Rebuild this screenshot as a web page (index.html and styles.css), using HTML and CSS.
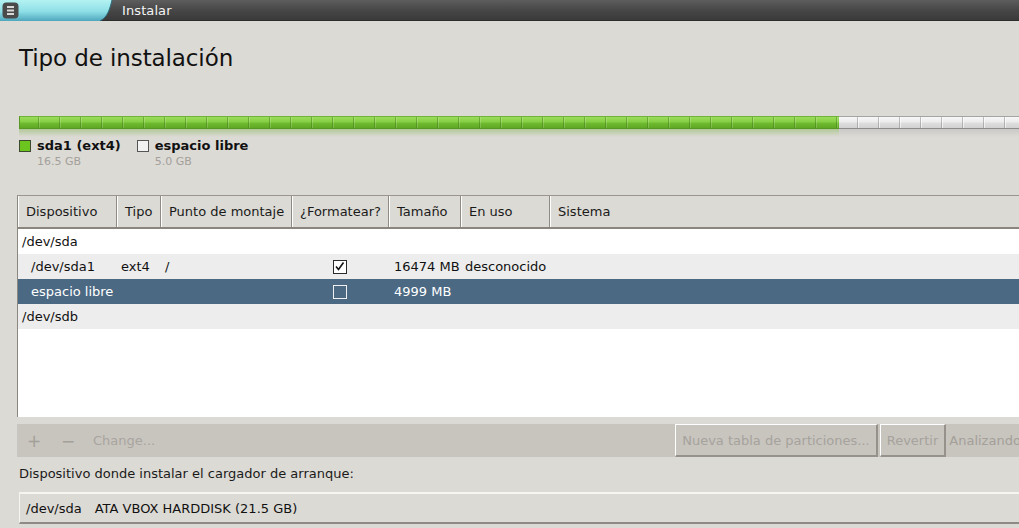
FILE: index.html
```html
<!DOCTYPE html>
<html lang="es">
<head>
<meta charset="utf-8">
<title>Instalar</title>
<link rel="stylesheet" href="styles.css">
</head>
<body>
<div class="page">
  <header class="topbar">
    <div class="tab">
      <svg class="tab-shape" width="116" height="21" viewBox="0 0 116 21">
        <defs>
          <linearGradient id="cy" x1="0" y1="0" x2="0" y2="1">
            <stop offset="0" stop-color="#b4f2f2"/>
            <stop offset="0.55" stop-color="#8ddfe6"/>
            <stop offset="1" stop-color="#4fa7bd"/>
          </linearGradient>
        </defs>
        <path d="M0 0 H112 C110 8 108 17 100 21 H0 Z" fill="url(#cy)"/>
        <path d="M112 0 C110 8 108 17 100 21" fill="none" stroke="#2e6f80" stroke-width="1"/>
      </svg>
      <span class="menu-btn">
        <svg width="17" height="17" viewBox="0 0 17 17">
          <rect x="0.5" y="0.5" width="16" height="16" rx="4" fill="#4a4a4a"/>
          <rect x="5" y="4" width="7" height="2" fill="#d8d8d8"/>
          <rect x="5" y="7.5" width="7" height="2" fill="#d8d8d8"/>
          <rect x="5" y="11" width="7" height="2" fill="#d8d8d8"/>
        </svg>
      </span>
    </div>
    <span class="title">Instalar</span>
  </header>

  <main class="main">
    <h1 class="heading">Tipo de instalación</h1>

    <div class="bar">
      <div class="seg seg-used" style="width:820px"></div>
      <div class="seg seg-free"></div>
    </div>
    <div class="reflect">
      <div class="ref ref-used" style="width:820px"></div>
      <div class="ref ref-free"></div>
    </div>

    <div class="legend">
      <div class="legend-item">
        <span class="swatch swatch-used"></span>
        <div class="legend-text">
          <div class="legend-name">sda1 (ext4)</div>
          <div class="legend-size">16.5 GB</div>
        </div>
      </div>
      <div class="legend-item">
        <span class="swatch swatch-free"></span>
        <div class="legend-text">
          <div class="legend-name">espacio libre</div>
          <div class="legend-size">5.0 GB</div>
        </div>
      </div>
    </div>

    <div class="table">
      <div class="thead">
        <div class="th">Dispositivo</div>
        <div class="th">Tipo</div>
        <div class="th">Punto de montaje</div>
        <div class="th">¿Formatear?</div>
        <div class="th">Tamaño</div>
        <div class="th">En uso</div>
        <div class="th">Sistema</div>
      </div>
      <div class="tbody">
        <div class="tr row-white">
          <div class="td dev">/dev/sda</div>
          <div class="td"></div><div class="td"></div><div class="td"></div>
          <div class="td"></div><div class="td"></div><div class="td"></div>
        </div>
        <div class="tr row-grey">
          <div class="td part">/dev/sda1</div>
          <div class="td">ext4</div>
          <div class="td">/</div>
          <div class="td center"><span class="check checked">
            <svg width="11" height="11" viewBox="0 0 11 11"><path d="M2 5.5 L4.5 8.5 L9.5 1.5" fill="none" stroke="#111" stroke-width="1.6"/></svg>
          </span></div>
          <div class="td size">16474 MB</div>
          <div class="td">desconocido</div>
          <div class="td"></div>
        </div>
        <div class="tr row-sel">
          <div class="td part">espacio libre</div>
          <div class="td"></div>
          <div class="td"></div>
          <div class="td center"><span class="check"></span></div>
          <div class="td size">4999 MB</div>
          <div class="td"></div>
          <div class="td"></div>
        </div>
        <div class="tr row-grey">
          <div class="td dev">/dev/sdb</div>
          <div class="td"></div><div class="td"></div><div class="td"></div>
          <div class="td"></div><div class="td"></div><div class="td"></div>
        </div>
      </div>
    </div>

    <div class="toolbar">
      <span class="tool-icon">+</span>
      <span class="tool-icon minus">−</span>
      <span class="tool-text">Change...</span>
      <span class="spacer"></span>
      <span class="btn">Nueva tabla de particiones...</span>
      <span class="btn">Revertir</span>
      <span class="btn btn-flat">Analizando</span>
    </div>

    <div class="boot-label">Dispositivo donde instalar el cargador de arranque:</div>
    <div class="combo">
      <span class="combo-dev">/dev/sda</span>
      <span>ATA VBOX HARDDISK (21.5 GB)</span>
    </div>
  </main>
</div>
</body>
</html>
```

FILE: styles.css
```css
* { box-sizing: border-box; }

html, body {
  margin: 0;
  padding: 0;
  overflow: hidden;
}

body {
  background: #dcdad5;
  font-family: "DejaVu Sans", "Liberation Sans", sans-serif;
  font-size: 13px;
  color: #1a1a1a;
  width: 1019px;
  height: 528px;
}

.page {
  width: 1120px;
}

/* Top bar */
.topbar {
  height: 21px;
  display: flex;
  align-items: center;
  background: linear-gradient(#5d5d5d, #474747 50%, #3a3a3a);
  border-bottom: 1px solid #2d2d2d;
}

.tab {
  position: relative;
  width: 116px;
  height: 21px;
  flex: none;
}

.tab-shape {
  display: block;
}

.menu-btn {
  position: absolute;
  left: 2px;
  top: 2px;
  width: 17px;
  height: 17px;
}

.menu-btn svg { display: block; }

.title {
  margin-left: 6px;
  color: #f4f4f4;
  font-size: 13px;
  line-height: 21px;
  letter-spacing: 0.1px;
}

/* Main */
.main {
  padding-left: 19px;
}

.heading {
  margin: 24px 0 0;
  font-size: 23px;
  font-weight: normal;
  line-height: 27px;
  color: #111;
  letter-spacing: -0.1px;
}

/* Partition bar */
.bar {
  margin-top: 44px;
  display: flex;
  height: 13px;
}

.seg {
  height: 13px;
}

.seg-used {
  border: 1px solid #569823;
  border-top-color: #6fb33a;
  border-right: none;
  background:
    repeating-linear-gradient(90deg, transparent 0 19px, rgba(60,120,20,0.45) 19px 20px, rgba(255,255,255,0.18) 20px 21px, transparent 21px),
    linear-gradient(#9bdc5a, #86cf45 45%, #6fbb30 55%, #5fa824);
  background-position: -1px 0, 0 0;
}

.seg-free {
  flex: 1;
  border: 1px solid #a4a4a4;
  border-left: none;
  border-bottom-color: #8c8c8c;
  background:
    repeating-linear-gradient(90deg, transparent 0 19px, rgba(120,120,120,0.45) 19px 20px, rgba(255,255,255,0.6) 20px 21px, transparent 21px),
    linear-gradient(#f7f7f7, #ececec 45%, #dedede 55%, #d2d2d2);
  background-position: -1px 0, 0 0;
}

.reflect {
  display: flex;
  height: 8px;
}

.ref-used {
  background: linear-gradient(rgba(95,168,36,0.35), rgba(95,168,36,0));
}

.ref-free {
  flex: 1;
  background: linear-gradient(rgba(150,150,150,0.25), rgba(150,150,150,0));
}

/* Legend */
.legend {
  display: flex;
  gap: 16px;
  margin-top: 1px;
}

.legend-item {
  display: flex;
  gap: 6px;
  align-items: flex-start;
}

.swatch {
  width: 12px;
  height: 12px;
  margin-top: 2px;
  border: 1px solid #3a3a3a;
  flex: none;
}

.swatch-used { background: #6cc51e; border-color: #3d4a30; }
.swatch-free { background: #f2f2f2; border-color: #555; }

.legend-name {
  font-weight: bold;
  font-size: 13px;
  line-height: 15px;
  color: #111;
}

.legend-size {
  font-size: 11px;
  line-height: 14px;
  margin-top: 2px;
  color: #a3a09b;
}

/* Table */
.table {
  margin-top: 26px;
  margin-left: -2px;
  height: 222px;
  border-top: 1px solid #9a968f;
  border-left: 1px solid #8a8680;
  background: #ffffff;
  display: flex;
  flex-direction: column;
}

.thead,
.tr {
  display: grid;
  grid-template-columns: 99px 44px 131px 97px 72px 89px 1fr;
}

.thead {
  height: 33px;
  background: #dcdad5;
  border-bottom: 2px solid #8a867e;
}

.th {
  display: flex;
  align-items: center;
  padding-left: 7px;
  border-left: 1px solid #ffffff;
  border-right: 1px solid #8f8b84;
  color: #1a1a1a;
  white-space: nowrap;
}

.tr {
  height: 25px;
}

.td {
  display: flex;
  align-items: center;
  padding-left: 4px;
  white-space: nowrap;
  color: #111;
}

.td.dev { padding-left: 4px; }
.td.part { padding-left: 13px; }
.td.center { justify-content: center; padding-left: 0; padding-right: 2px; }
.td.size { padding-left: 5px; }

.row-white { background: #ffffff; }
.row-grey { background: #ededed; }
.row-sel { background: #4b6983; }
.row-sel .td { color: #ffffff; }

.check {
  width: 14px;
  height: 14px;
  border: 1px solid #2a2a2a;
  background: #ffffff;
  display: flex;
  align-items: center;
  justify-content: center;
}

.check svg { display: block; }

.row-sel .check {
  background: transparent;
  border-color: #f0f0f0;
}

/* Toolbar */
.toolbar {
  margin-top: 7px;
  margin-left: -2px;
  height: 33px;
  background: #c8c5bf;
  display: flex;
  align-items: center;
  color: #a39f99;
}

.tool-icon {
  font-size: 17px;
  width: 24px;
  text-align: center;
  margin-left: 5px;
  color: #a39f99;
}

.tool-icon.minus { margin-left: 10px; }

.tool-text {
  margin-left: 13px;
  color: #a8a49e;
}

.spacer { flex: 1; max-width: 520px; }

.btn {
  height: 33px;
  display: flex;
  align-items: center;
  padding: 0 6px;
  border-top: 1px solid #ffffff;
  border-left: 1px solid #ffffff;
  border-right: 2px solid #96928b;
  border-bottom: 2px solid #96928b;
  color: #a6a29c;
  margin-right: 2px;
  white-space: nowrap;
}

.btn-flat {
  border: none;
  padding-left: 1px;
  color: #a39f99;
}

/* Boot loader */
.boot-label {
  margin-top: 9px;
  line-height: 16px;
  color: #1a1a1a;
}

.combo {
  margin-top: 10px;
  height: 32px;
  display: flex;
  align-items: center;
  gap: 13px;
  padding-left: 6px;
  border-top: 2px solid #f6f5f2;
  border-left: 1px solid #f6f5f2;
  border-bottom: 2px solid #8f8b84;
  background: #dcdad5;
  color: #111;
}
```
